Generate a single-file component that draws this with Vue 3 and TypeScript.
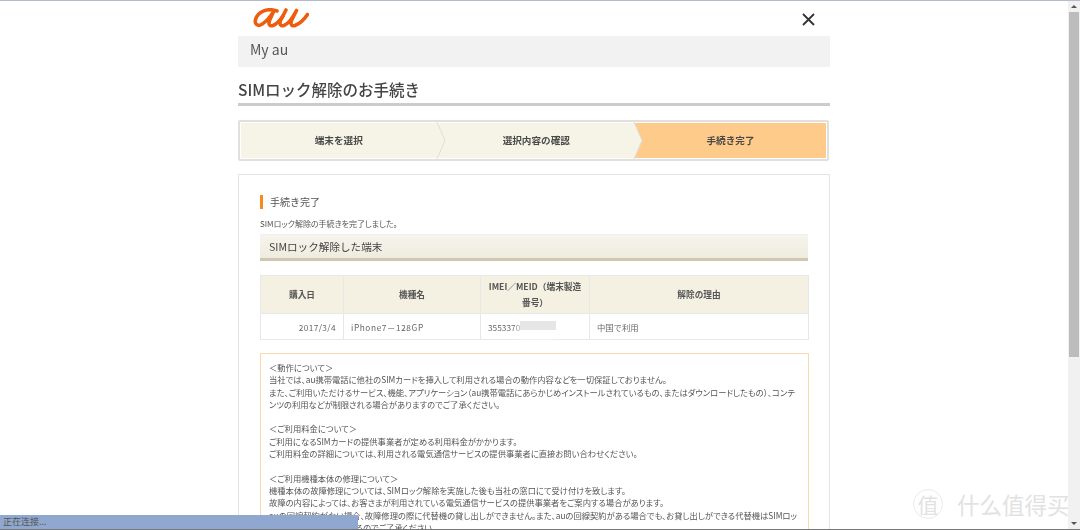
<template>
  <div class="page">
    <main class="content">
      <div class="wrap">
        <header class="top">
          <svg class="logo" viewBox="0 0 56 20" width="56" height="20" aria-label="au">
            <path d="M24 3C14 -.5 4.500 4 2.500 11.500 1.300 16.500 5 18.500 8.500 16.500 12.500 14 17.500 9 21 2.500L16.500 12.500C15 16.500 17 18.500 20 17.500 23.500 16 27 12.500 30 8" />
            <path d="M33 2L27.500 12.500C26 16.500 28 18.500 31 17.500 35.500 16 40 9 43.500 2.500L38.500 12.500C37 16.500 39 18.500 42 17.500 47 15.500 51.500 11 54.500 6.500" />
          </svg>
          <span class="close" aria-label="閉じる">
            <svg viewBox="0 0 13 13" width="13" height="13"><path d="M1 1l11 11M12 1L1 12" /></svg>
          </span>
        </header>
        <div class="myau">My au</div>
        <h1 class="title">SIMロック解除のお手続き</h1>

        <div class="steps">
          <div
            v-for="(s, i) in steps"
            :key="s"
            class="step"
            :class="{ current: i === steps.length - 1 }"
          >
            {{ s }}
            <svg v-if="i < steps.length - 1" class="chev" viewBox="0 0 10 37" preserveAspectRatio="none">
              <path class="chev-fill" d="M0 0h1l8 18.500-8 18.500H0z" />
              <path class="chev-line" d="M1 0l8 18.500-8 18.500" />
            </svg>
          </div>
        </div>

        <section class="panel">
          <h2 class="done">手続き完了</h2>
          <p class="lead">SIMロック解除の手続きを完了しました。</p>
          <h3 class="bar">SIMロック解除した端末</h3>

          <table class="info">
            <colgroup>
              <col style="width: 83px" />
              <col style="width: 137px" />
              <col style="width: 109px" />
              <col />
            </colgroup>
            <thead>
              <tr>
                <th>購入日</th>
                <th>機種名</th>
                <th>IMEI／MEID（端末製造番号）</th>
                <th>解除の理由</th>
              </tr>
            </thead>
            <tbody>
              <tr>
                <td class="date">2017/3/4</td>
                <td class="model">iPhone7－128GP</td>
                <td class="imei">3553370<span class="smudge"></span></td>
                <td class="reason">中国で利用</td>
              </tr>
            </tbody>
          </table>

          <div class="notice">
            <template v-for="(block, i) in notice" :key="i">
              <p v-for="line in block" :key="line">{{ line }}</p>
              <p v-if="i < notice.length - 1" class="gap">&nbsp;</p>
            </template>
          </div>
        </section>
      </div>
    </main>

    <aside class="scrollbar">
      <span class="arrow up"></span>
      <span class="thumb"></span>
      <span class="arrow down"></span>
    </aside>

    <div class="status">正在连接...</div>
    <div class="watermark">
      <span class="mark">值</span>
      <span class="brand">什么值得买</span>
    </div>
  </div>
</template>

<script setup lang="ts">
const steps: string[] = ['端末を選択', '選択内容の確認', '手続き完了']

const notice: string[][] = [
  [
    '＜動作について＞',
    '当社では、au携帯電話に他社のSIMカードを挿入して利用される場合の動作内容などを一切保証しておりません。',
    'また、ご利用いただけるサービス、機能、アプリケーション（au携帯電話にあらかじめインストールされているもの、またはダウンロードしたもの）、コンテンツの利用などが制限される場合がありますのでご了承ください。',
  ],
  [
    '＜ご利用料金について＞',
    'ご利用になるSIMカードの提供事業者が定める利用料金がかかります。',
    'ご利用料金の詳細については、利用される電気通信サービスの提供事業者に直接お問い合わせください。',
  ],
  [
    '＜ご利用機種本体の修理について＞',
    '機種本体の故障修理については、SIMロック解除を実施した後も当社の窓口にて受け付けを致します。',
    '故障の内容によっては、お客さまが利用されている電気通信サービスの提供事業者をご案内する場合があります。',
    'auの回線契約がない場合、故障修理の際に代替機の貸し出しができません。また、auの回線契約がある場合でも、お貸し出しができる代替機はSIMロック解除できないものもあるのでご了承ください',
  ],
]
</script>

<style>
html,
body {
  margin: 0;
  background: #fff;
}
</style>

<style scoped>
.page {
  position: relative;
  display: flex;
  width: 1080px;
  height: 530px;
  overflow: hidden;
  border-top: 1px solid #b4bbcd;
  border-bottom: 1px solid #777;
  box-sizing: border-box;
  font-family: "Noto Sans CJK JP", "Noto Sans", sans-serif;
  color: #444;
}

.content {
  flex: 1;
  display: flex;
  justify-content: center;
  overflow: hidden;
}

.wrap {
  width: 592px;
  flex: none;
  filter: blur(0.3px);
}

.top {
  display: flex;
  align-items: flex-start;
  justify-content: space-between;
  height: 35px;
  padding: 7px 15px 0;
  box-sizing: border-box;
}

.logo {
  display: block;
  fill: none;
  stroke: #ee5c0e;
  stroke-width: 3.6;
  stroke-linecap: round;
  stroke-linejoin: round;
}

.close svg {
  display: block;
  margin-top: 5px;
  fill: none;
  stroke: #333;
  stroke-width: 1.8;
}

.myau {
  height: 31px;
  padding-left: 12px;
  background: #f2f2f2;
  font-size: 14px;
  line-height: 26px;
  color: #555;
  box-sizing: border-box;
}

.title {
  margin: 9px 0 0;
  padding-bottom: 1px;
  height: 26px;
  border-bottom: 3px solid #ccc;
  font-size: 15.500px;
  font-weight: 500;
  line-height: 26px;
  color: #444;
}

.steps {
  display: flex;
  width: 591px;
  height: 41px;
  margin-top: 14px;
  border: 2px solid #e0e0e0;
  border-radius: 2px;
  box-sizing: border-box;
}

.step {
  position: relative;
  flex: 1;
  display: flex;
  align-items: center;
  justify-content: center;
  padding-bottom: 2px;
  background: #f6f4e6;
  font-size: 9.600px;
  font-weight: 700;
  color: #4a4a4a;
  border: 1px solid #fff;
  box-sizing: border-box;
}

.step.current {
  background: #ffcb8a;
  flex: 0 0 192px;
  border-left: 0;
}

.chev {
  position: absolute;
  top: -1px;
  right: -9px;
  width: 10px;
  height: calc(100% + 2px);
  z-index: 1;
}

.chev-fill {
  fill: #f6f4e6;
}

.chev-line {
  fill: none;
  stroke: #ddd;
  stroke-width: 1;
}

.panel {
  margin-top: 13px;
  padding: 20px 21px 0;
  border: 1px solid #e4e4e4;
  height: 400px;
  box-sizing: border-box;
}

.done {
  margin: 0;
  padding-left: 7px;
  border-left: 3px solid #f58a1f;
  font-size: 10px;
  font-weight: 400;
  line-height: 14px;
  color: #555;
}

.lead {
  margin: 9px 0 0;
  font-size: 8px;
  line-height: 12px;
  color: #555;
  font-feature-settings: "palt";
}

.bar {
  margin: 4px 0 0;
  height: 27px;
  padding-left: 9px;
  background: linear-gradient(#f6f4ec, #efebdf);
  border-bottom: 3px solid #cfc7ae;
  border-top: 1px solid #eee;
  box-sizing: border-box;
  font-size: 10.600px;
  font-weight: 400;
  line-height: 23px;
  color: #444;
}

.info {
  width: 549px;
  margin-top: 14px;
  border-collapse: collapse;
  table-layout: fixed;
  font-size: 8.300px;
  color: #666;
}

.info th,
.info td {
  border: 1px solid #e8e8e8;
  padding: 0 7px;
}

.info th {
  height: 37px;
  background: #f4f1e3;
  font-size: 8.700px;
  font-weight: 700;
  line-height: 16px;
  color: #555;
}

.info td {
  height: 25px;
}

.date {
  text-align: right;
  letter-spacing: 0.4px;
}

.model {
  letter-spacing: 0.6px;
}

.imei {
  position: relative;
}

.smudge {
  position: absolute;
  left: 39px;
  top: 7px;
  width: 36px;
  height: 9px;
  background: #e6e6e6;
  box-shadow: 0 6px 8px 2px #fff;
}

.notice {
  width: 549px;
  margin-top: 13px;
  padding: 7px 9px 0 8px;
  border: 1px solid #fbd9ae;
  box-sizing: border-box;
  font-size: 8.300px;
  line-height: 12.300px;
  font-feature-settings: "palt";
  color: #555;
}

.notice p {
  margin: 0;
}

.scrollbar {
  flex: 0 0 12px;
  position: relative;
  display: flex;
  flex-direction: column;
  align-items: center;
  background: #f1f1f1;
}

.thumb {
  flex: none;
  height: 345px;
  width: 10px;
  background: #bcbcbc;
}

.arrow {
  flex: none;
  width: 0;
  height: 0;
  margin: 4px 0;
  border-left: 3px solid transparent;
  border-right: 3px solid transparent;
}

.arrow.up {
  border-bottom: 3px solid #555;
}

.arrow.down {
  position: absolute;
  bottom: 0;
  border-top: 3px solid #555;
}

.status {
  position: absolute;
  left: 0;
  bottom: 0;
  width: 358px;
  height: 14px;
  padding-left: 3px;
  background: #90a8d0;
  font-size: 9px;
  line-height: 14px;
  color: #555;
  box-sizing: border-box;
}

.watermark {
  position: absolute;
  left: 913px;
  bottom: 9px;
  width: 155px;
  display: flex;
  align-items: center;
  gap: 14px;
  overflow: hidden;
  font-size: 22.500px;
  white-space: nowrap;
  color: #e2e2e2;
}

.mark {
  flex: none;
  width: 30px;
  height: 30px;
  border-radius: 50%;
  border: 1px solid #eaeaea;
  font-size: 21px;
  line-height: 28px;
  text-align: center;
  box-sizing: border-box;
}
</style>
